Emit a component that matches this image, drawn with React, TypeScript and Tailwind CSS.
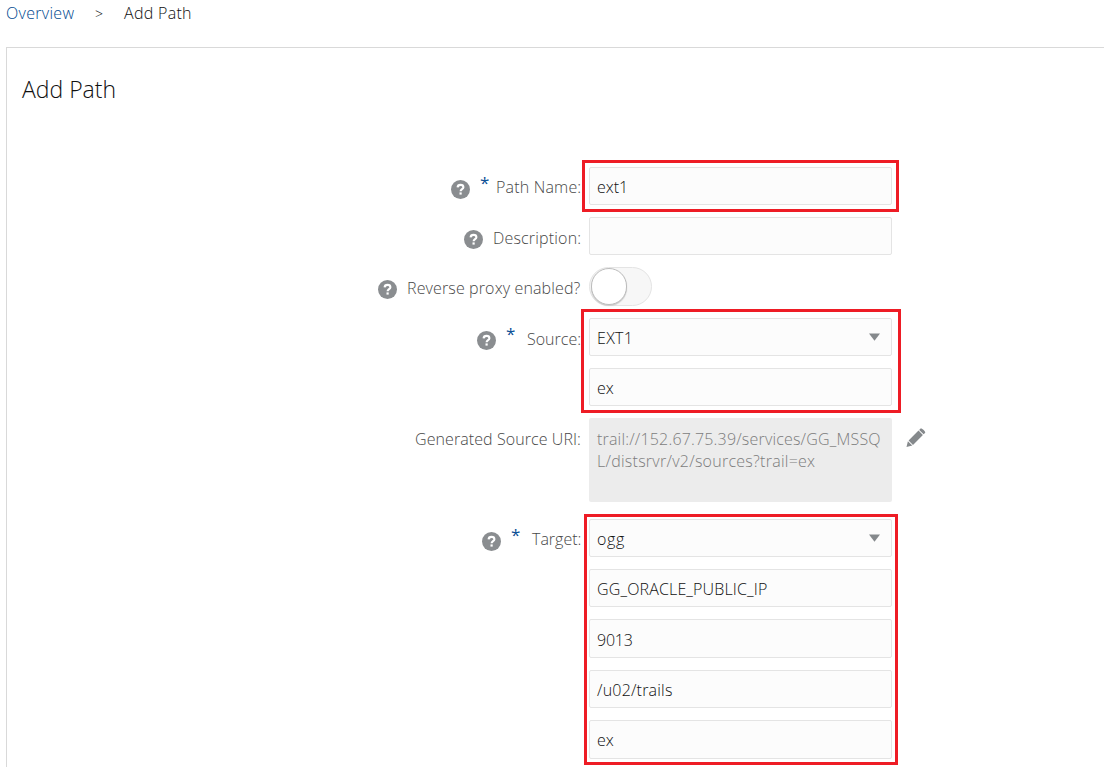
import React from "react";

function HelpIcon() {
  return (
    <svg width="19" height="19" viewBox="0 0 19 19" className="mt-1 block shrink-0">
      <circle cx="9.5" cy="9.5" r="9.5" fill="#8a8d90" />
      <path d="M6.6 7.4C6.7 5.7 7.8 4.9 9.5 4.9s2.9.9 2.9 2.3c0 1.9-2.8 2-2.8 4" fill="none" stroke="#fff" strokeWidth="2.1" />
      <rect x="8.5" y="12.4" width="2.2" height="2.2" fill="#fff" />
    </svg>
  );
}

type LabelProps = { text: string; width: string; help?: boolean; required?: boolean; gap?: string; lift?: string };

function Label({ text, width, help = true, required = false, gap = "mr-[7px]", lift = "mt-0" }: LabelProps) {
  return (
    <div className="flex w-[574px] shrink-0 items-start justify-end pt-[9px] text-[#484848]">
      {help && <HelpIcon />}
      {required ? <span className={`-mt-[2px] ml-[10px] w-[9px] text-[17px] font-normal leading-[18px] text-[#0a4f96] ${gap}`}>*</span> : <span className="w-[10px]" />}
      <span className={`whitespace-nowrap leading-6 ${lift} ${width}`}>{text}</span>
    </div>
  );
}

type FieldProps = { value?: string; select?: boolean; height?: string; tracking?: string };

function Field({ value = "", select = false, height = "h-[38px] pt-[2px]", tracking = "" }: FieldProps) {
  return (
    <div className={`flex w-[303px] items-center justify-between rounded-[2px] border border-[#e4e4e4] bg-[#fcfcfc] pl-[7px] pr-[10px] text-[#101010] ${height}`}>
      <span className={`whitespace-nowrap ${tracking}`}>{value}</span>
      {select && (
        <svg width="12" height="8" viewBox="0 0 12 8" className="-mt-[2px]">
          <path d="M0 0.5h11L5.5 7.7z" fill="#85898c" />
        </svg>
      )}
    </div>
  );
}

function Highlight({ place }: { place: string }) {
  return <div className={`pointer-events-none absolute border-[3px] border-[#ee1c25] ${place}`} />;
}

export default function App() {
  return (
    <div className="flex h-[767px] w-[1104px] flex-col overflow-hidden bg-white font-['Open_Sans',sans-serif] text-[16px] font-[340] leading-[22px] text-[#101010]">
      <nav className="flex h-[47px] shrink-0 pl-[6px] pt-[2px]">
        <a className="w-[89px] tracking-[0.3px] text-[#00498f]">Overview</a>
        <span className="w-[29px] pt-px text-[14px]">&gt;</span>
        <span className="tracking-[0.3px]">Add Path</span>
      </nav>
      <main className="ml-[6px] grow border-l border-t border-[#d9d9d9]">
        <h1 className="h-[119px] pl-[15px] pt-[25px] text-[23px] leading-8">Add Path</h1>
        <form className="flex flex-col">
          <div className="flex gap-2">
            <Label text="Path Name:" width="w-[85px] tracking-[0.18px]" required lift="-mt-px" />
            <div className="relative">
              <Field value="ext1" />
              <Highlight place="-left-[7px] -top-[7px] h-[52px] w-[317px]" />
            </div>
          </div>
          <div className="mt-3 flex gap-2">
            <Label text="Description:" width="w-[88px] tracking-[0.18px]" />
            <Field />
          </div>
          <div className="mt-3 flex h-[39px] gap-2">
            <Label text="Reverse proxy enabled?" width="w-[174px] tracking-[0.13px]" />
            <div className="flex h-[39px] w-[63px] items-center rounded-full border border-[#e4e4e4] bg-[#f7f7f7] pl-px">
              <div className="h-[37px] w-[36px] rounded-full border border-[#bcbcbc] bg-white shadow-[0_1px_1px_#ccc]" />
            </div>
          </div>
          <div className="mt-3 flex gap-2">
            <Label text="Source:" width="w-[54px]" required gap="mr-[12px]" />
            <div className="relative flex flex-col gap-3">
              <Field value="EXT1" select tracking="tracking-[0.3px]" />
              <Field value="ex" />
              <Highlight place="-left-[8px] -top-[9px] h-[104px] w-[320px]" />
            </div>
          </div>
          <div className="mt-3 flex gap-2">
            <Label text="Generated Source URI:" width="w-[166px] tracking-[0.08px]" help={false} />
            <div className="h-[84px] w-[303px] rounded-[2px] bg-[#ececec] pl-2 pt-[10px] text-[#7c7c7c]">
              <div className="whitespace-nowrap tracking-[0.18px]">trail://152.67.75.39/services/GG_MSSQ</div>
              <div className="whitespace-nowrap tracking-[0.26px]">L/distsrvr/v2/sources?trail=ex</div>
            </div>
            <svg width="20" height="20" viewBox="0 0 20 20" className="ml-[6px] mt-[10px]" fill="#85898c">
              <path d="M0.5 19l1.4-5.8 4.4 4.4z M2.6 12.5L12.5 2.6l4.4 4.4L7 16.9z M13.2 1.9l1.3-1.3c1.2-1.2 5.9 3.2 4.5 4.5L17.6 6.3z" />
            </svg>
          </div>
          <div className="mt-[17px] flex gap-2">
            <Label text="Target:" width="w-[49px]" required gap="mr-[12px]" lift="-mt-px" />
            <div className="relative flex flex-col gap-3">
              <Field value="ogg" select tracking="tracking-[0.6px]" />
              <Field value="GG_ORACLE_PUBLIC_IP" tracking="tracking-[0.15px]" />
              <Field value="9013" height="h-[39px] pt-[2px]" tracking="-tracking-[0.2px]" />
              <Field value="/u02/trails" tracking="tracking-[0.2px]" />
              <Field value="ex" height="h-[39px] pt-px" />
              <Highlight place="-left-[5px] -top-[5px] h-[251px] w-[314px]" />
            </div>
          </div>
        </form>
      </main>
    </div>
  );
}
